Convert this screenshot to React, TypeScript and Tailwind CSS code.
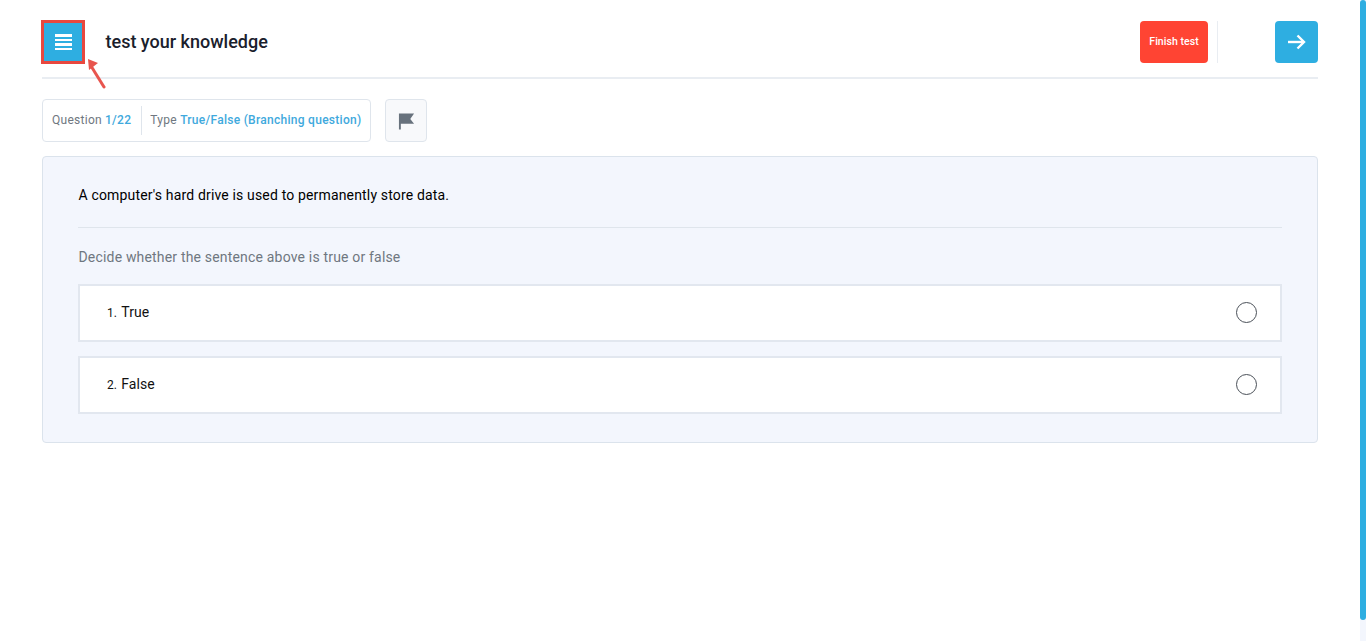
const options = [
  { n: '1.', label: 'True' },
  { n: '2.', label: 'False' },
];

export default function App() {
  return (
    <div className="relative h-[641px] overflow-hidden bg-white font-['Roboto',sans-serif]">
      {/* scroll track and thumb */}
      <div className="absolute right-0 top-0 h-full w-[6px] bg-[#f3f6fd]">
        <div className="h-[620px] rounded-b-[3px] rounded-t-[3px] bg-[#2eaee1]" />
      </div>

      <div className="pl-[42px] pr-[48px]">
        {/* Header */}
        <div className="flex h-[79px] items-start border-b-2 border-[#e9edf2] pt-[21px]">
          <button className="relative flex h-[42px] w-[42px] flex-col items-center justify-center gap-[2px] rounded-[3px] bg-[#2eaee1]">
            <span className="h-[2.5px] w-[17px] bg-white" />
            <span className="h-[2.5px] w-[17px] bg-white" />
            <span className="h-[2.5px] w-[17px] bg-white" />
            <span className="h-[2.5px] w-[17px] bg-white" />
            <span className="absolute -inset-[1px] border-[3px] border-[#e8483f]" />
            <svg className="absolute left-[43px] top-[37px]" width="24" height="32" viewBox="0 0 24 32">
              <path d="M6 8 L19 29" fill="none" stroke="#e8554e" strokeWidth="3" strokeLinecap="round" />
              <path d="M3 1 L13 5 L4 12 Z" fill="#e8554e" />
            </svg>
          </button>
          <h1 className="ml-[21.5px] mt-[10px] text-[18px] font-medium leading-[22px] text-[#1a202c]">test your knowledge</h1>
          <div className="ml-auto flex items-center">
            <button className="h-[42px] w-[68px] rounded-[4px] bg-[#ff4433] text-[10.5px] font-medium tracking-[0.05px] text-white">
              Finish test
            </button>
            <div className="ml-[9px] h-[42px] w-[1px] bg-[#e9edf2]" />
            <button className="ml-[57px] flex h-[42px] w-[43px] items-center justify-center rounded-[4px] bg-[#2eaee1]">
              <svg width="19" height="16" viewBox="0 0 19 16" fill="none" stroke="white" strokeWidth="2.4">
                <path d="M1 8 H17" />
                <path d="M10.5 1.5 L17 8 L10.5 14.5" />
              </svg>
            </button>
          </div>
        </div>

        {/* Question info */}
        <div className="mt-[20px] flex items-center">
          <div className="flex h-[43px] w-[329px] items-center rounded-[4px] border border-[#dfe5ec] pb-[1px] text-[12px] tracking-[0.28px] text-[#6f7780]">
            <div className="flex h-[29px] items-center border-r border-[#dfe5ec] pl-[9px] pr-[10px]">
              Question <span className="ml-[3px] font-medium text-[#3fa9dd]">1/22</span>
            </div>
            <div className="pl-[8px]">
              Type <span className="font-medium text-[#3fa9dd]">True/False (Branching question)</span>
            </div>
          </div>
          <button className="ml-[14px] flex h-[43px] w-[42px] items-center justify-center rounded-[4px] border border-[#dfe5ec] bg-[#f8f9fb]">
            <svg className="ml-[1px]" width="17" height="18" viewBox="0 0 18 18">
              <path d="M1 1 H17 L13 7 L17 12 H3 V18 H1 Z" fill="#68727d" />
            </svg>
          </button>
        </div>

        {/* Question card */}
        <div className="mt-[14px] h-[287px] rounded-[4px] border border-[#dbe3ec] bg-[#f3f6fd] px-[35px] pt-[29px]">
          <p className="pl-[0.5px] text-[14px] leading-[18px] tracking-[0.16px] text-black">A computer's hard drive is used to permanently store data.</p>
          <div className="mt-[23px] h-[1px] bg-[#dfe5ec]" />
          <p className="mt-[20px] pl-[0.5px] text-[14px] leading-[18px] tracking-[0.18px] text-[#6f7780]">Decide whether the sentence above is true or false</p>
          <div className="mt-[18px] flex flex-col gap-[14px]">
            {options.map((o) => (
              <div
                key={o.label}
                className="flex h-[58px] items-center justify-between border-2 border-[#e2e7ef] bg-white pb-[1px] pl-[27px] pr-[23px]"
              >
                <div className="text-[14px] tracking-[0.1px] text-[#111]">
                  <span className="text-[12px]">{o.n}</span> <span className="ml-[0.5px]">{o.label}</span>
                </div>
                <span className="h-[21px] w-[21px] rounded-full border border-[#4a5058] bg-white" />
              </div>
            ))}
          </div>
        </div>
      </div>
    </div>
  );
}
